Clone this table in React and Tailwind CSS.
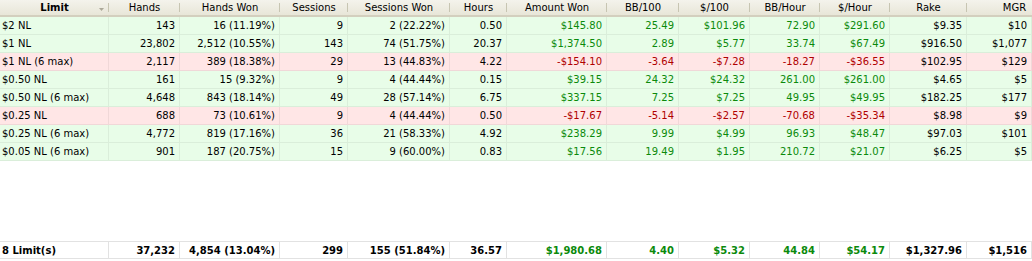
const cols = [
  { name: 'Limit', w: 'w-[109px]', left: true },
  { name: 'Hands', w: 'w-[71px]' },
  { name: 'Hands Won', w: 'w-[100px]' },
  { name: 'Sessions', w: 'w-[68px]' },
  { name: 'Sessions Won', w: 'w-[102px]' },
  { name: 'Hours', w: 'w-[57px]' },
  { name: 'Amount Won', w: 'w-[100px]', money: true },
  { name: 'BB/100', w: 'w-[72px]', money: true },
  { name: '$/100', w: 'w-[71px]', money: true },
  { name: 'BB/Hour', w: 'w-[70px]', money: true },
  { name: '$/Hour', w: 'w-[70px]', money: true },
  { name: 'Rake', w: 'w-[77px]' },
  { name: 'MGR', w: 'w-[65px]', hw: 'w-[95px]' },
];

const rows = [
  ['$2 NL', '143', '16 (11.19%)', '9', '2 (22.22%)', '0.50', '$145.80', '25.49', '$101.96', '72.90', '$291.60', '$9.35', '$10'],
  ['$1 NL', '23,802', '2,512 (10.55%)', '143', '74 (51.75%)', '20.37', '$1,374.50', '2.89', '$5.77', '33.74', '$67.49', '$916.50', '$1,077'],
  ['$1 NL (6 max)', '2,117', '389 (18.38%)', '29', '13 (44.83%)', '4.22', '-$154.10', '-3.64', '-$7.28', '-18.27', '-$36.55', '$102.95', '$129'],
  ['$0.50 NL', '161', '15 (9.32%)', '9', '4 (44.44%)', '0.15', '$39.15', '24.32', '$24.32', '261.00', '$261.00', '$4.65', '$5'],
  ['$0.50 NL (6 max)', '4,648', '843 (18.14%)', '49', '28 (57.14%)', '6.75', '$337.15', '7.25', '$7.25', '49.95', '$49.95', '$182.25', '$177'],
  ['$0.25 NL', '688', '73 (10.61%)', '9', '4 (44.44%)', '0.50', '-$17.67', '-5.14', '-$2.57', '-70.68', '-$35.34', '$8.98', '$9'],
  ['$0.25 NL (6 max)', '4,772', '819 (17.16%)', '36', '21 (58.33%)', '4.92', '$238.29', '9.99', '$4.99', '96.93', '$48.47', '$97.03', '$101'],
  ['$0.05 NL (6 max)', '901', '187 (20.75%)', '15', '9 (60.00%)', '0.83', '$17.56', '19.49', '$1.95', '210.72', '$21.07', '$6.25', '$5'],
];

const totals = ['8 Limit(s)', '37,232', '4,854 (13.04%)', '299', '155 (51.84%)', '36.57', '$1,980.68', '4.40', '$5.32', '44.84', '$54.17', '$1,327.96', '$1,516'];

const HeaderCell = ({ col, first }) => (
  <div className={`${col.hw || col.w} shrink-0 relative flex items-center justify-center h-full ${first ? 'font-bold' : ''}`}>
    <span>{col.name}</span>
    {first && (
      <svg className="absolute right-[5px] top-[8px]" width="5" height="3" viewBox="0 0 5 3">
        <path d="M0 0h5L2.5 3z" fill="#aca899" />
      </svg>
    )}
    <div className="absolute right-0 top-[3px] bottom-[3px] w-px bg-[#c7c5b2]" />
  </div>
);

const Row = ({ cells }) => {
  const loss = cells[6].startsWith('-');
  return (
    <div className={`flex h-[18px] leading-[18px] border-b border-black/[0.06] ${loss ? 'bg-[#ffe6e6]' : 'bg-[#e8fde8]'}`}>
      {cells.map((c, i) => (
        <div
          key={i}
          className={`${cols[i].w} shrink-0 border-r border-black/[0.06] whitespace-nowrap overflow-hidden ${
            cols[i].left ? 'text-left pl-[2px]' : 'text-right pr-[4px]'
          } ${cols[i].money ? (loss ? 'text-[#b00000]' : 'text-[#0b8a0b]') : 'text-black'}`}
        >
          {c}
        </div>
      ))}
    </div>
  );
};

export default function App() {
  return (
    <div className="w-[1032px] h-[261px] overflow-hidden bg-white flex flex-col text-[10px] text-black" style={{ fontFamily: '"DejaVu Sans", Verdana, sans-serif' }}>
      <div className="flex h-[17px] shrink-0 bg-gradient-to-b from-[#f4f3ec] to-[#e8e6d8] border-b-2 border-[#d3cfbe] text-black">
        {cols.map((c, i) => (
          <HeaderCell key={c.name} col={c} first={i === 0} />
        ))}
      </div>
      <div className="flex flex-col">
        {rows.map((r) => (
          <Row key={r[0]} cells={r} />
        ))}
      </div>
      <div className="flex-1" />
      <div className="flex h-[18px] leading-[17px] shrink-0 mb-[2px] border-t border-b border-[#e2e2e2] font-bold">
        {totals.map((c, i) => (
          <div
            key={i}
            className={`${cols[i].w} shrink-0 border-r border-[#e2e2e2] whitespace-nowrap overflow-hidden ${
              cols[i].left ? 'text-left pl-[2px]' : 'text-right pr-[4px]'
            } ${cols[i].money ? 'text-[#0b8a0b]' : 'text-black'}`}
          >
            {c}
          </div>
        ))}
      </div>
    </div>
  );
}
